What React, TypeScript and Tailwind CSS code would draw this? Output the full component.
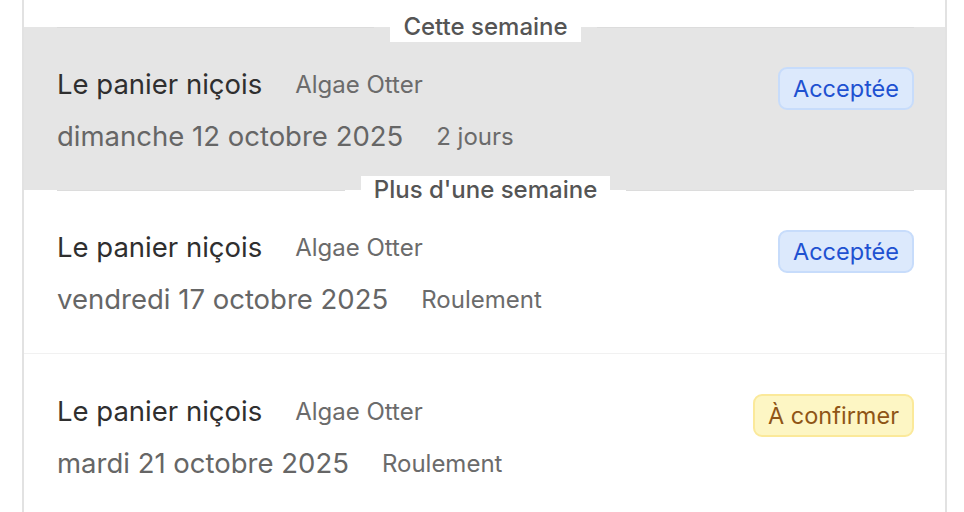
import React from 'react';

type Status = 'accepted' | 'pending';

interface Shift {
  id: number;
  shop: string;
  member: string;
  date: string;
  note: string;
  status: Status;
  active?: boolean;
}

interface Group {
  label: string;
  shifts: Shift[];
}

const groups: Group[] = [
  {
    label: 'Cette semaine',
    shifts: [
      { id: 1, shop: 'Le panier niçois', member: 'Algae Otter', date: 'dimanche 12 octobre 2025', note: '2 jours', status: 'accepted', active: true },
    ],
  },
  {
    label: "Plus d'une semaine",
    shifts: [
      { id: 2, shop: 'Le panier niçois', member: 'Algae Otter', date: 'vendredi 17 octobre 2025', note: 'Roulement', status: 'accepted' },
      { id: 3, shop: 'Le panier niçois', member: 'Algae Otter', date: 'mardi 21 octobre 2025', note: 'Roulement', status: 'pending' },
    ],
  },
];

const Badge: React.FC<{ status: Status }> = ({ status }) =>
  status === 'accepted' ? (
    <span className="inline-flex h-[43px] items-center rounded-[9px] border-2 border-[#c7dcfb] bg-[#dce9fc] px-[13px] text-[23.5px] text-[#1e51d1]">
      Acceptée
    </span>
  ) : (
    <span className="inline-flex h-[43px] items-center rounded-[9px] border-2 border-[#fbe99a] bg-[#fdf6c4] px-[13px] text-[23.5px] text-[#8f5516]">
      À confirmer
    </span>
  );

const Separator: React.FC<{ label: string }> = ({ label }) => (
  <div className="relative z-10 flex h-0 items-center gap-4 pl-[33px] pr-[31px]">
    <div className="h-px flex-1 bg-[#dcdcdc]" />
    <span className="flex h-[29px] items-center bg-white px-[13px] text-[24px] font-medium text-[#555]">
      {label}
    </span>
    <div className="h-px flex-1 bg-[#dcdcdc]" />
  </div>
);

const ShiftRow: React.FC<{ shift: Shift }> = ({ shift }) => (
  <div
    className={
      shift.active
        ? 'flex items-start justify-between bg-[#e5e5e5] pl-[33px] pr-[31px] pt-[40px] pb-[35px]'
        : 'flex items-start justify-between border-b border-[#f1f1f1] pl-[33px] pr-[31px] pt-[40px] pb-[35px]'
    }
  >
    <div className="flex flex-col gap-4">
      <div className="flex h-9 items-center gap-[33px]">
        <span className="text-[27.5px] text-[#2f2f2f]">{shift.shop}</span>
        <span className="text-[24px] text-[#6b6b6b]">{shift.member}</span>
      </div>
      <div className="flex h-9 items-center gap-[33px]">
        <span className="text-[27.5px] text-[#666]">{shift.date}</span>
        <span className="text-[24px] text-[#6b6b6b]">{shift.note}</span>
      </div>
    </div>
    <Badge status={shift.status} />
  </div>
);

export default function App() {
  return (
    <div className="h-[512px] overflow-hidden bg-white pl-[22px] pr-[17px] font-['Inter',sans-serif]">
      <div className="h-full border-x-2 border-[#e2e2e2] pt-[27px]">
        {groups.map((g) => (
          <div key={g.label}>
            <Separator label={g.label} />
            {g.shifts.map((s) => (
              <ShiftRow key={s.id} shift={s} />
            ))}
          </div>
        ))}
      </div>
    </div>
  );
}
